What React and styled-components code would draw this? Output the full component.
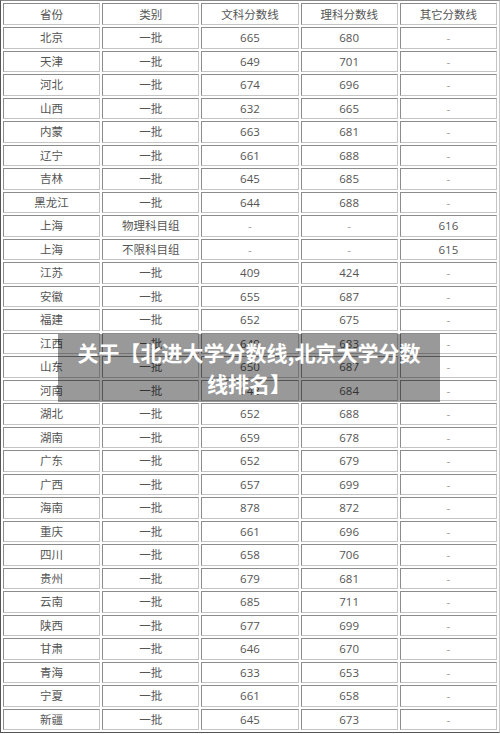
import React from 'react';
import styled, { createGlobalStyle } from 'styled-components';

const GlobalStyle = createGlobalStyle`
  html, body {
    margin: 0;
    padding: 0;
    background: #fff;
  }
  body {
    font-family: "Open Sans", "Noto Sans CJK SC", sans-serif;
  }
`;

const rows = [
  ['北京', '一批', '665', '680', '-'],
  ['天津', '一批', '649', '701', '-'],
  ['河北', '一批', '674', '696', '-'],
  ['山西', '一批', '632', '665', '-'],
  ['内蒙', '一批', '663', '681', '-'],
  ['辽宁', '一批', '661', '688', '-'],
  ['吉林', '一批', '645', '685', '-'],
  ['黑龙江', '一批', '644', '688', '-'],
  ['上海', '物理科目组', '-', '-', '616'],
  ['上海', '不限科目组', '-', '-', '615'],
  ['江苏', '一批', '409', '424', '-'],
  ['安徽', '一批', '655', '687', '-'],
  ['福建', '一批', '652', '675', '-'],
  ['江西', '一批', '649', '683', '-'],
  ['山东', '一批', '650', '687', '-'],
  ['河南', '一批', '648', '684', '-'],
  ['湖北', '一批', '652', '688', '-'],
  ['湖南', '一批', '659', '678', '-'],
  ['广东', '一批', '652', '679', '-'],
  ['广西', '一批', '657', '699', '-'],
  ['海南', '一批', '878', '872', '-'],
  ['重庆', '一批', '661', '696', '-'],
  ['四川', '一批', '658', '706', '-'],
  ['贵州', '一批', '679', '681', '-'],
  ['云南', '一批', '685', '711', '-'],
  ['陕西', '一批', '677', '699', '-'],
  ['甘肃', '一批', '646', '670', '-'],
  ['青海', '一批', '633', '653', '-'],
  ['宁夏', '一批', '661', '658', '-'],
  ['新疆', '一批', '645', '673', '-'],
];

const headers = ['省份', '类别', '文科分数线', '理科分数线', '其它分数线'];

const Page = styled.div`
  position: relative;
  width: 500px;
  height: 734px;
  overflow: hidden;
`;

const Table = styled.table`
  width: 500px;
  table-layout: fixed;
  border-collapse: separate;
  border-spacing: 2px;
  border-style: solid;
  border-width: 1px;
  border-color: #888 #c8c8c8 #555 #555;
`;

const Cell = styled.td`
  height: 19.5px;
  padding: 0;
  text-align: center;
  vertical-align: middle;
  font-size: 11.5px;
  line-height: 19px;
  color: ${p => (p.$dash ? '#999' : '#555')};
  border-style: solid;
  border-width: 1px;
  border-color: #8c8c8c #c4c4c4 #c4c4c4 #8c8c8c;
  white-space: nowrap;
`;

const HeadCell = styled(Cell).attrs({ as: 'th' })`
  font-weight: normal;
  height: 20px;
`;

const Caption = styled.div`
  position: absolute;
  left: 58px;
  top: 334px;
  width: 382px;
  height: 68px;
  background: rgba(0, 0, 0, 0.4);
  display: flex;
  align-items: center;
  justify-content: center;
  text-align: center;
  padding: 0 6px;
  box-sizing: border-box;
  color: #fff;
  font-family: "Noto Sans CJK SC", sans-serif;
  font-weight: bold;
  font-size: 21px;
  line-height: 31px;
`;

export default function App() {
  return (
    <Page>
      <GlobalStyle />
      <Table>
        <thead>
          <tr>
            {headers.map(h => (
              <HeadCell key={h}>{h}</HeadCell>
            ))}
          </tr>
        </thead>
        <tbody>
          {rows.map((r, i) => (
            <tr key={i}>
              {r.map((v, j) => (
                <Cell key={j} $dash={v === '-'}>{v}</Cell>
              ))}
            </tr>
          ))}
        </tbody>
      </Table>
      <Caption>
        <span>关于【北进大学分数线,北京大学分数<br />线排名】</span>
      </Caption>
    </Page>
  );
}
